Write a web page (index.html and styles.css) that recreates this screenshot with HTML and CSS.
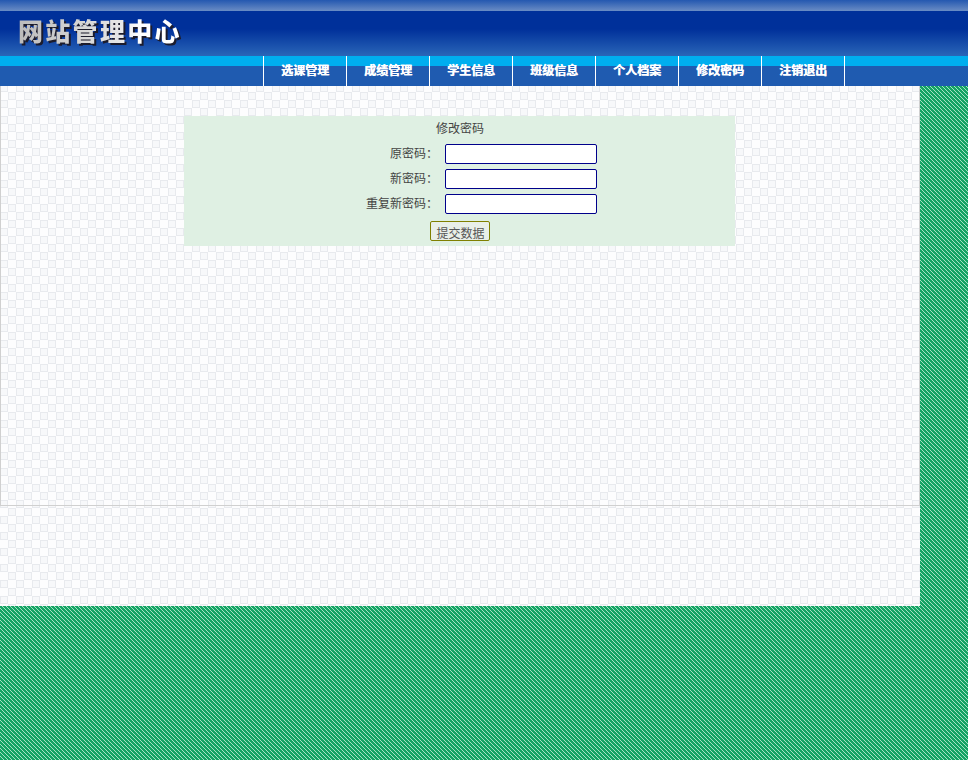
FILE: index.html
```html
<!DOCTYPE html>
<html lang="zh-CN">
<head>
<meta charset="utf-8">
<title>网站管理中心</title>
<link rel="stylesheet" href="styles.css">
</head>
<body>
<header class="header">
  <div class="top-strip"></div>
  <div class="banner"><div class="logo">网站管理中心</div></div>
  <nav class="nav">
    <a class="nav-item">选课管理</a>
    <a class="nav-item">成绩管理</a>
    <a class="nav-item">学生信息</a>
    <a class="nav-item">班级信息</a>
    <a class="nav-item">个人档案</a>
    <a class="nav-item">修改密码</a>
    <a class="nav-item nav-last">注销退出</a>
  </nav>
</header>
<div class="page">
  <main class="main">
    <form class="panel">
      <div class="panel-title">修改密码</div>
      <div class="fields">
        <label class="field-label">原密码：</label><input class="field-input" type="password">
        <label class="field-label">新密码：</label><input class="field-input" type="password">
        <label class="field-label">重复新密码：</label><input class="field-input" type="password">
      </div>
      <button class="submit" type="button">提交数据</button>
    </form>
  </main>
  <footer class="footer"></footer>
</div>
</body>
</html>
```
FILE: styles.css
```css
* { box-sizing: border-box; }
html, body { margin: 0; padding: 0; }
body {
  height: 760px;
  overflow: hidden;
  font: 12px/1.2 "Liberation Sans", "Noto Sans CJK SC", sans-serif;
  color: #444;
  background-color: #14a364;
  background-image: url("data:image/svg+xml,%3Csvg xmlns='http://www.w3.org/2000/svg' width='4' height='4' shape-rendering='crispEdges'%3E%3Crect width='4' height='4' fill='%2314a364'/%3E%3Cpath d='M0 0h1v1H0zM1 1h1v1H1zM2 2h1v1H2zM3 3h1v1H3z' fill='%23a5e2c4'/%3E%3C/svg%3E");
  background-size: 4px 4px;
}
.header { height: 86px; }
.top-strip {
  height: 11px;
  background: linear-gradient(#2458b0, #6a8cc4);
}
.banner {
  height: 45px;
  padding: 4px 0 0 18px;
  background: linear-gradient(#00309a 0, #00309a 40%, #2a66b8 100%);
}
.logo {
  font: 900 25px/30px "Noto Sans CJK SC", sans-serif;
  letter-spacing: 2.3px;
  width: 170px;
  white-space: nowrap;
  color: #ddd;
  background: linear-gradient(90deg, #bbb 0, #e6e6e6 60%, #fff 72%);
  -webkit-background-clip: text;
  background-clip: text;
  -webkit-text-fill-color: transparent;
  filter: drop-shadow(2px 2px 0 #1c1c2c);
}
.nav {
  height: 30px;
  padding-left: 263px;
  display: flex;
  background: linear-gradient(#00aeef 0 10px, #1f5bb0 10px);
}
.nav-item {
  width: 83px;
  padding-top: 7px;
  border-left: 1px solid #fff;
  text-align: center;
  color: #fff;
  font: 700 12px/14px "Noto Sans CJK SC", sans-serif;
  text-shadow: 0.4px 0 0 #fff;
}
.nav-last { width: 84px; border-right: 1px solid #fff; }
.page {
  width: 920px;
  background-color: #fdfdfe;
  background-image: url("data:image/svg+xml,%3Csvg xmlns='http://www.w3.org/2000/svg' width='16' height='16' shape-rendering='crispEdges'%3E%3Crect width='16' height='16' fill='%23fdfdfe'/%3E%3Cg fill='%23f7f8fa' stroke='%23e8eaee'%3E%3Crect x='8.5' y='0.5' width='7' height='7'/%3E%3Crect x='0.5' y='8.5' width='7' height='7'/%3E%3C/g%3E%3C/svg%3E");
  background-size: 16px 16px;
  background-position: 0 86px;
}
.main {
  height: 420px;
  padding-top: 30px;
  border: 1px solid #d0d0d0;
  border-top: 0;
}
.panel {
  width: 551px;
  height: 130px;
  margin-left: 183px;
  background: #dff0e3;
  display: flex;
  flex-direction: column;
  align-items: center;
}
.panel-title {
  height: 28px;
  padding-top: 5px;
  line-height: 14px;
  font-family: "Noto Sans CJK SC", sans-serif;
  margin-left: 1px;
}
.fields {
  width: 551px;
  display: grid;
  grid-template-columns: 254px 152px;
  column-gap: 7px;
  row-gap: 5px;
  align-items: center;
}
.field-label {
  text-align: right;
  line-height: 14px;
  padding-bottom: 2px;
  font-family: "Noto Sans CJK SC", sans-serif;
}
.field-input {
  width: 152px;
  height: 20px;
  padding: 0;
  background: #fff;
  border: 1px solid #00008b;
  border-radius: 2px;
}
.submit {
  width: 60px;
  height: 20px;
  margin-top: 7px;
  padding: 3px 0 0 2px;
  font: 12px/14px "Noto Sans CJK SC", sans-serif;
  color: #555;
  background: #e9efe8;
  border: 1px solid #808000;
  border-radius: 2px;
}
.footer { height: 100px; }
```
